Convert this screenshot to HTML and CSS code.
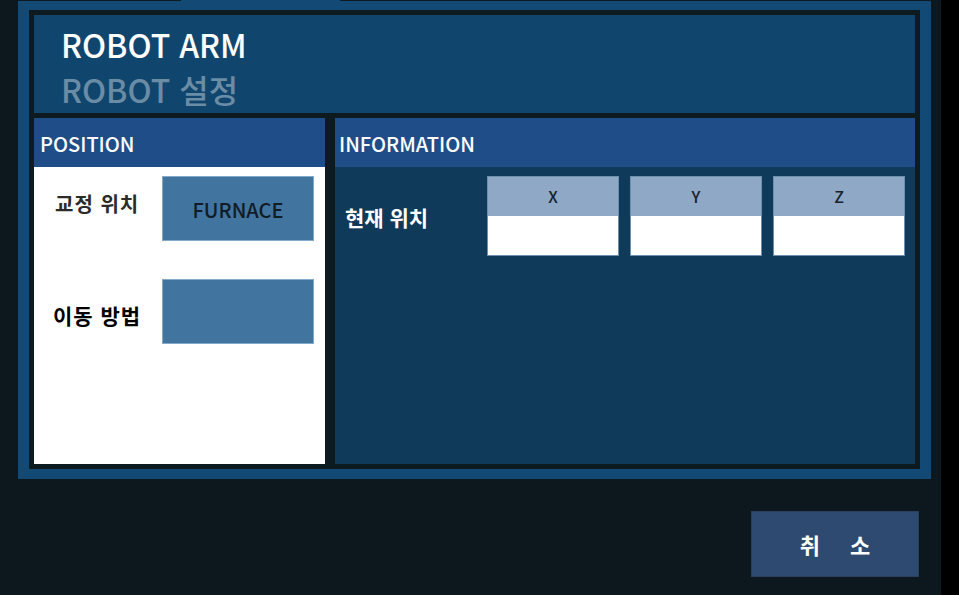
FILE: index.html
```html
<!DOCTYPE html>
<html lang="ko">
<head>
<meta charset="utf-8">
<title>ROBOT ARM</title>
<link rel="stylesheet" href="styles.css">
</head>
<body>
<div class="screen">
  <div class="main">
    <div class="frame">
      <div class="tabline"><div class="seg seg-a"></div><div class="seg-gap"></div><div class="seg seg-b"></div></div>
      <div class="inner">
        <div class="header">
          <div class="title">ROBOT ARM</div>
          <div class="subtitle">ROBOT 설정</div>
        </div>
        <div class="panels">
          <div class="panel panel-left">
            <div class="phead phead-left">POSITION</div>
            <div class="pbody-left">
              <div class="lbl lbl-1">교정 위치</div>
              <div class="valbox">FURNACE</div>
              <div class="lbl lbl-2">이동 방법</div>
              <div class="valbox"></div>
            </div>
          </div>
          <div class="panel panel-right">
            <div class="phead phead-right">INFORMATION</div>
            <div class="pbody-right">
              <div class="rlbl">현재 위치</div>
              <div class="coords">
                <div class="coord"><div class="chead">X</div><div class="cval"></div></div>
                <div class="coord"><div class="chead">Y</div><div class="cval"></div></div>
                <div class="coord"><div class="chead">Z</div><div class="cval"></div></div>
              </div>
            </div>
          </div>
        </div>
      </div>
    </div>
    <div class="footer">
      <button class="cancel"><span>취</span><span>소</span></button>
    </div>
  </div>
  <div class="edge"></div>
</div>
</body>
</html>
```
FILE: styles.css
```css
* { box-sizing: border-box; }
html, body { margin: 0; padding: 0; }
body {
  width: 959px;
  height: 595px;
  overflow: hidden;
  background: #0d181e;
  font-family: "Noto Sans CJK KR", "Noto Sans", sans-serif;
}
.screen { display: flex; width: 959px; height: 595px; }
.main { width: 941px; padding-left: 18px; padding-right: 10px; display: flex; flex-direction: column; }
.edge { flex: 1; background: #000; }

.frame {
  width: 913px;
  height: 479px;
  background: #124a75;
  display: flex;
  flex-direction: column;
}
.tabline { height: 1px; display: flex; }
.seg { background: #0d1a22; }
.seg-a { width: 163px; }
.seg-gap { width: 159px; }
.seg-b { flex: 1; }

.inner {
  margin: 9px 11px 10px 11px;
  flex: 1;
  background: #0d1a20;
  padding: 5px;
  display: flex;
  flex-direction: column;
  gap: 5px;
}
.header {
  height: 98px;
  background: #10466e;
  padding: 7px 0 0 27px;
}
.title, .subtitle {
  font-size: 32px;
  line-height: 45px;
  font-weight: 500;
  white-space: nowrap;
}
.title { color: #ffffff; }
.subtitle { color: #6b8ca5; }

.panels { flex: 1; display: flex; gap: 10px; }
.panel { display: flex; flex-direction: column; }
.panel-left { width: 291px; }
.panel-right { flex: 1; }
.phead {
  height: 49px;
  background: #1e4d88;
  color: #fff;
  font-size: 20px;
  font-weight: 500;
  display: flex;
  align-items: center;
  padding-top: 2px;
}
.phead-left { padding-left: 6px; }
.phead-right { padding-left: 4px; }

.pbody-left {
  flex: 1;
  background: #ffffff;
  padding: 9px 11px 0 0;
  display: grid;
  grid-template-columns: 1fr 152px;
  grid-auto-rows: 65px;
  row-gap: 38px;
  align-content: start;
}
.lbl {
  align-self: center;
  padding-left: 21px;
  font-size: 20px;
  font-weight: 700;
  letter-spacing: 1px;
  white-space: nowrap;
}
.lbl-1 { color: #2b2b2b; margin-top: -10px; }
.lbl-2 { color: #000; font-size: 21px; padding-left: 19px; margin-top: 6px; }
.valbox {
  background: #41749e;
  border: 1px solid #86a9c8;
  color: #101c26;
  font-size: 20px;
  font-weight: 500;
  display: flex;
  align-items: center;
  justify-content: center;
  padding-top: 2px;
}

.pbody-right {
  flex: 1;
  background: #0f3a59;
  padding: 9px 10px 0 10px;
  display: flex;
  align-items: flex-start;
}
.rlbl {
  width: 142px;
  height: 80px;
  display: flex;
  align-items: center;
  color: #fff;
  font-size: 21px;
  font-weight: 700;
  padding-top: 2px;
  white-space: nowrap;
}
.coords { display: flex; gap: 11px; }
.coord {
  width: 132px;
  height: 80px;
  display: flex;
  flex-direction: column;
  border: 1px solid #6f8fae;
}
.chead {
  height: 39px;
  background: #8fa8c5;
  color: #17222c;
  font-size: 16px;
  font-weight: 500;
  display: flex;
  align-items: center;
  justify-content: center;
  padding-bottom: 2px;
}
.cval { flex: 1; background: #ffffff; }

.footer {
  display: flex;
  justify-content: flex-end;
  padding-top: 32px;
  padding-right: 12px;
}
.cancel {
  width: 168px;
  height: 66px;
  background: #2e4a70;
  border: 1px solid #27405f;
  color: #fff;
  font-family: "Noto Sans CJK KR", sans-serif;
  font-size: 22px;
  font-weight: 700;
  display: flex;
  align-items: center;
  justify-content: center;
  gap: 30px;
  padding: 0;
}
```
